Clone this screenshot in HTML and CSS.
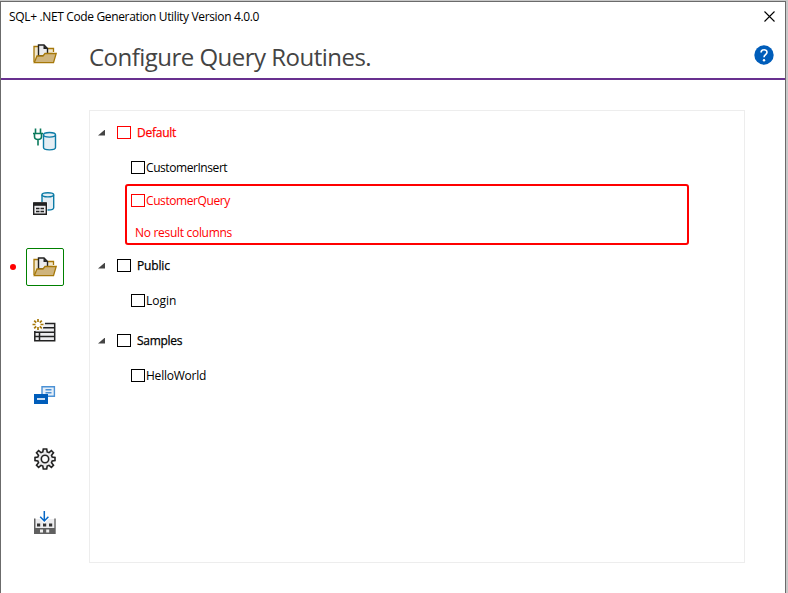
FILE: index.html
```html
<!DOCTYPE html>
<html lang="en">
<head>
<meta charset="utf-8">
<title>SQL+ .NET Code Generation Utility</title>
<link rel="stylesheet" href="styles.css">
</head>
<body>
<svg class="defs" aria-hidden="true">
  <symbol id="folder" viewBox="0 0 24 20">
    <path d="M1 18V2.500h8l2 2h9.500V8" fill="#f1e7cd" stroke="#a67809" stroke-width="1.300"/>
    <path d="M5.500 12V1H11l3.500 3.500V12z" fill="#ebebed" stroke="#222" stroke-width="1.400"/>
    <path d="M10.500 1v4h4z" fill="#222"/>
    <path d="M1.200 18.700L4 12h6l2-2.500h11.200l-2.700 9.200z" fill="#cfb47c" stroke="#a67809" stroke-width="1.300"/>
  </symbol>
</svg>
<div class="window">
  <div class="titlebar">
    <span class="caption">SQL+ .NET Code Generation Utility Version 4.0.0</span>
    <svg class="close" width="11" height="11" viewBox="0 0 11 11"><path d="M.5.5l10 10M10.500.5l-10 10" stroke="#000" stroke-width="1.100"/></svg>
  </div>
  <header class="header">
    <svg class="header-icon" width="24" height="20"><use href="#folder"/></svg>
    <h1>Configure Query Routines.</h1>
    <svg class="help" width="20" height="20" viewBox="0 0 20 20"><circle cx="10" cy="10" r="9.700" fill="#005dba"/><path d="M7.100 7.600C7.100 3.800 13 4 13 7.300C13 9.600 10 9.700 10 12.300" fill="none" stroke="#fff" stroke-width="1.600"/><circle cx="10" cy="15.200" r="1.200" fill="#fff"/></svg>
  </header>
  <main class="main">
    <nav class="nav">
      <div class="step"><span class="tile">
        <svg width="24" height="24" viewBox="0 0 24 24"><path d="M2.500 1.500v5M7.500 1.500v5M0 6.500h10M1.500 6.500v3q0 3 3.500 3t3.500-3v-3M5 12.500v6" fill="none" stroke="#0b7a5c" stroke-width="1.600"/><path d="M10.500 8v12.500c0 3.100 12 3.100 12 0V8" fill="#e5eef4" stroke="#0c7ba6" stroke-width="1.400"/><ellipse cx="16.500" cy="7.800" rx="6" ry="2.300" fill="#e5eef4" stroke="#0c7ba6" stroke-width="1.400"/></svg>
      </span></div>
      <div class="step"><span class="tile">
        <svg width="24" height="24" viewBox="0 0 24 24"><path d="M9 3.800v13c0 3 11.700 3 11.700 0v-13" fill="#e5eef4" stroke="#0c7ba6" stroke-width="1.400"/><ellipse cx="14.850" cy="3.800" rx="5.850" ry="2.100" fill="#e5eef4" stroke="#0c7ba6" stroke-width="1.400"/><path d="M0 11h14.500v13H0z" fill="#fff"/><path d="M.7 12h12.600v11.200H.7z" fill="#ececee" stroke="#222" stroke-width="1.400"/><path d="M1 11.500h12v3.300H1z" fill="#222"/><path d="M3 17.500h3.500M7.500 17.500H11M3 20.500h3.500M7.500 20.500H11" stroke="#222" stroke-width="1.600"/></svg>
      </span></div>
      <div class="step"><i class="dot"></i><span class="tile selected">
        <svg width="24" height="20"><use href="#folder"/></svg>
      </span></div>
      <div class="step"><span class="tile">
        <svg width="24" height="24" viewBox="0 0 24 24"><path d="M2 4h20v18H2z" fill="#ececee"/><path d="M12 4.500h9.700v17.200H1.800V12M10 8.800h12M1.800 13.300h20M1.800 17.500h20M6.500 13v8.500" fill="none" stroke="#222" stroke-width="1.500"/><circle cx="5" cy="5.500" r="6" fill="#fff"/><path d="M5 0v3M5 8v3M-.5 5.500h3M7.500 5.500h3M1.200 1.700l2 2M6.800 7.300l2 2M8.800 1.700l-2 2M3.200 7.300l-2 2" stroke="#a67809" stroke-width="1.700"/></svg>
      </span></div>
      <div class="step"><span class="tile">
        <svg width="24" height="24" viewBox="0 0 24 24"><path d="M9 3.700h12.400v9.500H9z" fill="#e5eef8" stroke="#4b91d5" stroke-width="1.400"/><path d="M12.500 6.700h6M12.500 9.700h6" stroke="#4b91d5" stroke-width="1.400"/><path d="M1 11h14v10H1z" fill="#005dba"/><path d="M4 16h8" stroke="#fff" stroke-width="1.600"/></svg>
      </span></div>
      <div class="step"><span class="tile">
        <svg width="24" height="24" viewBox="-12 -12 24 24"><path d="M-1.700-10H1.700L2.200-7 4-6.300 6.400-8.300 8.500-6.200 6.500-3.700 7.200-2 10-1.600V1.600L7.200 2 6.500 3.700 8.500 6.200 6.400 8.300 4 6.300 2.200 7 1.700 10H-1.700L-2.200 7-4 6.300-6.400 8.300-8.500 6.200-6.500 3.700-7.200 2-10 1.600V-1.600L-7.200-2-6.500-3.700-8.500-6.200-6.400-8.300-4-6.300-2.200-7z" fill="#ececee" stroke="#222" stroke-width="1.600"/><circle r="3.700" fill="#fff" stroke="#222" stroke-width="1.600"/></svg>
      </span></div>
      <div class="step"><span class="tile">
        <svg width="24" height="24" viewBox="0 0 24 24"><path d="M2 8h19v9H2z" fill="#ececee"/><path d="M1 7.500h1.500V17h18.800V7.500h1.400V23H1z" fill="#606060"/><path d="M4 12.500h3.200v3H4zM10 12.500h3.200v3H10zM16 12.500h3.200v3H16z" fill="#333"/><path d="M7 18.500h3v3H7zM13.200 18.500h3v3h-3z" fill="#eee"/><path d="M11.300 0v9.500M7 5.800l4.300 4.300 4.300-4.300" fill="none" stroke="#fff" stroke-width="3.500"/><path d="M11.300 0v9.500M7.200 5.800l4.100 4.200 4.100-4.200" fill="none" stroke="#0868c6" stroke-width="1.500"/></svg>
      </span></div>
    </nav>
    <section class="tree">
      <div class="row group error"><i class="arrow"></i><i class="check"></i><span class="t-default">Default</span></div>
      <div class="row item"><i class="check"></i><span class="t-insert">CustomerInsert</span></div>
      <div class="invalid error">
        <div class="line"><i class="check"></i><span class="t-query">CustomerQuery</span></div>
        <div class="message">No result columns</div>
      </div>
      <div class="row group"><i class="arrow"></i><i class="check"></i><span class="t-public">Public</span></div>
      <div class="row item"><i class="check"></i><span class="t-login">Login</span></div>
      <div class="row group spaced"><i class="arrow"></i><i class="check"></i><span class="t-samples">Samples</span></div>
      <div class="row item"><i class="check"></i><span class="t-hello">HelloWorld</span></div>
    </section>
  </main>
</div>
</body>
</html>
```
FILE: styles.css
```css
* { box-sizing: border-box; }
body {
  margin: 0;
  height: 593px;
  overflow: hidden;
  padding: 1px 2px 0 0;
  background: #c8c8c8;
  font: 12px/16px "Open Sans", "Noto Sans", sans-serif;
  color: #000;
}
.defs { position: absolute; width: 0; height: 0; }
svg { display: block; overflow: visible; }
.window {
  height: 592px;
  background: #fff;
  border: 1px solid #6b6b6b;
  border-image: linear-gradient(#6b6b6b, #6b6b6b) 1;
  border-bottom: 0;
}
.titlebar {
  display: flex;
  justify-content: space-between;
  align-items: center;
  height: 28px;
  padding: 0 10px 0 8px;
}
.caption { padding-top: 2px; letter-spacing: -0.35px; }
.header {
  display: flex;
  align-items: center;
  height: 50px;
  padding: 0 11px 0 32px;
  border-bottom: 2px solid #68308f;
}
.header-icon { margin-bottom: 1px; }
h1 {
  flex: 1;
  margin: 5px 0 0 32px;
  font-size: 24px;
  font-weight: 400;
  line-height: 32px;
  letter-spacing: -0.52px;
  color: #444;
  white-space: nowrap;
}
.help { margin-top: 1px; }
.main { display: flex; }
.nav { width: 88px; padding-top: 27px; }
.step {
  display: flex;
  align-items: center;
  justify-content: center;
  height: 64px;
  position: relative;
}
.tile {
  display: flex;
  align-items: center;
  justify-content: center;
  width: 38px;
  height: 38px;
  border: 1px solid transparent;
  border-radius: 2px;
}
.tile.selected { border-color: #008000; }
.dot {
  position: absolute;
  left: 9px;
  top: 29px;
  width: 6px;
  height: 6px;
  border-radius: 50%;
  background: #f00;
}
.tree {
  width: 656px;
  height: 453px;
  margin-top: 30px;
  padding-top: 4px;
  border: 1px solid #ededed;
}
.row { display: flex; align-items: center; white-space: nowrap; }
.group { height: 35px; padding-left: 8px; -webkit-text-stroke: 0.25px currentColor; }
.group .check { margin: 0 6px 0 13px; }
.item { height: 34px; padding-left: 41px; }
.item span { padding-top: 2px; }
.spaced { margin-top: 6px; }
.check {
  flex: none;
  width: 14px;
  height: 13px;
  border: 1px solid currentColor;
}
.item .check, .line .check { margin-right: 1px; }
.arrow {
  width: 7px;
  height: 6px;
  margin-right: -1px;
  background: #444;
  clip-path: polygon(100% 0, 100% 100%, 0 100%);
}
.t-default { letter-spacing: -0.25px; }
.t-insert { letter-spacing: -0.43px; }
.t-query { letter-spacing: -0.42px; }
.t-public { letter-spacing: -0.15px; }
.t-samples { letter-spacing: -0.3px; }
.t-hello { letter-spacing: -0.23px; }
.error { color: #f00; }
.invalid {
  width: 564px;
  height: 61px;
  margin: 0 0 3px 35px;
  border: 2px solid #f00;
  border-radius: 3px;
}
.line { display: flex; align-items: center; height: 29px; padding-left: 4px; }
.message { height: 28px; padding: 10px 0 0 8px; letter-spacing: -0.3px; }
```
